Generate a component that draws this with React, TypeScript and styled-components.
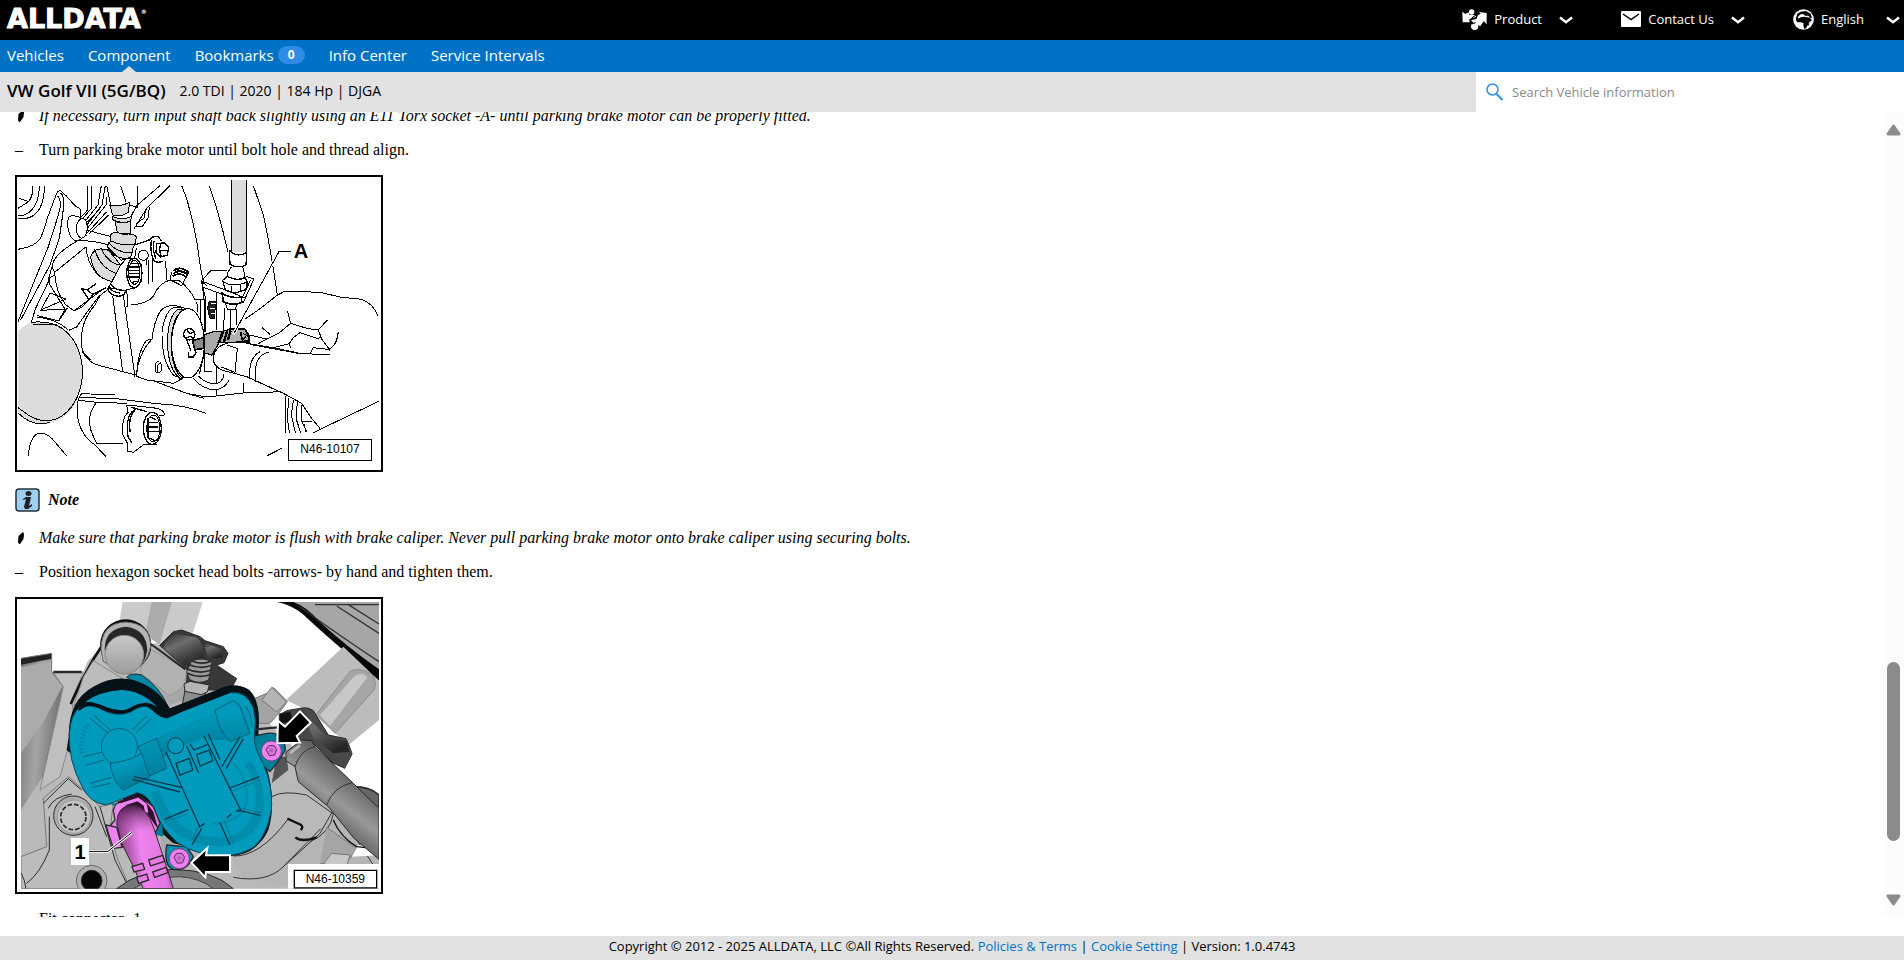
import React from "react";
import styled, { createGlobalStyle } from "styled-components";

const GlobalStyle = createGlobalStyle`
  *, *::before, *::after { box-sizing: border-box; }
  body { margin: 0; background: #fff; color: #000; font-family: "Open Sans", "Noto Sans", sans-serif; }
`;

const Page = styled.div`
  height: 100vh;
  display: flex;
  flex-direction: column;
`;

const TopBar = styled.header`
  flex: none;
  height: 40px;
  padding: 0 4px 2px 7px;
  display: flex;
  align-items: center;
  justify-content: space-between;
  background: #000;
`;

const Logo = styled.a`
  display: flex;
  align-items: flex-start;
  color: #fff;
  font: bold 27px/32px "DejaVu Sans", sans-serif;
  text-decoration: none;
  -webkit-text-stroke: 1px #fff;
  sup { font-size: 6px; line-height: 18px; -webkit-text-stroke: 0; }
`;

const Menus = styled.div`
  display: flex;
  gap: 48px;
`;

const MenuButton = styled.button`
  display: flex;
  align-items: center;
  gap: 7px;
  padding: 0;
  border: 0;
  background: none;
  color: #fff;
  font: 13px/20px "Open Sans", sans-serif;
  text-align: left;
`;

const MenuLabel = styled.span`
  min-width: 48px;
  margin-right: 10px;
`;

const Nav = styled.nav`
  flex: none;
  height: 32px;
  padding: 0 7px;
  display: flex;
  gap: 24px;
  background: #0072c6;
`;

const NavLink = styled.a<{ $active?: boolean }>`
  position: relative;
  padding-bottom: 2px;
  display: flex;
  align-items: center;
  gap: 4px;
  color: #fff;
  font-size: 15px;
  line-height: 20px;
  text-decoration: none;
  &::after {
    content: "";
    display: ${(p) => (p.$active ? "block" : "none")};
    position: absolute;
    left: 50%;
    bottom: 0;
    margin-left: -7px;
    border: 7px solid transparent;
    border-top: 0;
    border-bottom: 6px solid #e2e2e2;
  }
`;

const Badge = styled.span`
  width: 27px;
  border-radius: 9px;
  background: #2f8be6;
  font-size: 12px;
  font-weight: 700;
  line-height: 18px;
  text-align: center;
`;

const VehicleBar = styled.div`
  flex: none;
  height: 40px;
  display: flex;
  align-items: stretch;
  background: #e2e2e2;
`;

const Vehicle = styled.div`
  flex: 1;
  padding: 0 7px 2px;
  display: flex;
  align-items: center;
  gap: 14px;
  h1 { margin: 0; font-size: 17px; line-height: 36px; font-weight: 600; }
  span { font-size: 14px; line-height: 36px; }
`;

const Search = styled.label`
  flex: 0 0 428px;
  padding: 0 10px;
  display: flex;
  align-items: center;
  gap: 9px;
  background: #fff;
  input {
    flex: 1;
    padding: 0;
    border: 0;
    outline: 0;
    font: 500 13px/20px "Open Sans", sans-serif;
    &::placeholder { color: #8a8a8a; opacity: 1; }
  }
`;

const Main = styled.main`
  flex: 1;
  min-height: 0;
  padding-bottom: 19px;
  display: flex;
`;

const Viewport = styled.div`
  flex: 1;
  overflow: hidden;
  padding-left: 15px;
`;

const Article = styled.article`
  margin-top: -5px;
  display: flex;
  flex-direction: column;
  align-items: flex-start;
  gap: 16px;
  font: 16px/18px "Liberation Serif", "Times New Roman", serif;
`;

const Line = styled.p<{ $italic?: boolean }>`
  margin: 0;
  display: grid;
  grid-template-columns: 24px 1fr;
  align-items: center;
  font-style: ${(p) => (p.$italic ? "italic" : "normal")};
  white-space: nowrap;
`;

const NoteTitle = styled.div`
  height: 25px;
  display: flex;
  align-items: flex-start;
  gap: 8px;
  font-weight: 700;
  font-style: italic;
  line-height: 24px;
`;

const Figure = styled.figure`
  width: 368px;
  height: 297px;
  margin: 0;
  border: 2px solid #000;
  svg { display: block; width: 100%; height: 100%; }
`;

const ScrollBar = styled.div`
  flex: 0 0 22px;
  padding: 12px 0 11px;
  display: flex;
  flex-direction: column;
  align-items: center;
  background: #fcfcfc;
`;

const Spacer = styled.div<{ $grow: number }>`
  flex: ${(p) => p.$grow} 0 0;
`;

const Thumb = styled.div`
  flex: 179 0 0;
  width: 13px;
  border-radius: 7px;
  background: #8b8b8b;
`;

const Footer = styled.footer`
  flex: none;
  height: 24px;
  background: #e2e2e2;
  font-size: 13px;
  line-height: 21px;
  text-align: center;
  a { color: #0072c6; text-decoration: none; }
`;

const Chevron = () => (
  <svg width="14" height="9" viewBox="0 0 14 9">
    <path d="M1 2.500 7 7.200l6-4.700" fill="none" stroke="#fff" strokeWidth="2.500" />
  </svg>
);

const ProductIcon = () => (
  <svg width="25" height="21" viewBox="0 0 75 63" fill="#fff">
    <path d="M1 8l9 7 9-5 4 8 14 0 6 6-12 2-10 6 3 8-22 0z" />
    <circle cx="29" cy="9" r="8" />
    <path d="M74 12l0 34-9-9-10 14-16-7-14-10 18-4 5-12 8-3-5-6z" />
    <circle cx="38" cy="52" r="11" />
    <path d="M24 40l8-16 12-6M29 45l12-4" stroke="#000" strokeWidth="3" fill="none" />
  </svg>
);

const MailIcon = () => (
  <svg width="20" height="16" viewBox="0 0 20 16">
    <rect width="20" height="16" rx="1" fill="#fff" />
    <path d="M2 3l8 5.500L18 3" fill="none" stroke="#000" strokeWidth="1.500" />
  </svg>
);

const GlobeIcon = () => (
  <svg width="21" height="21" viewBox="0 0 63 63">
    <circle cx="31.500" cy="31.500" r="31" fill="#fff" />
    <path
      d="M9 28l4-14 10-6 16-2 14 8 4 12-6 2 6 5-7 6-5 8-6 11-5 2-3-10 1-7-8-3-11 0-4-6z"
      fill="#000"
    />
    <path d="M16 22l7-6 9 0 4 4 10 0 6 6-8-1-12-2-9 2-8 4z" fill="#fff" />
    <path d="M44 47l5-4-2 8z" fill="#000" />
  </svg>
);

const SearchIcon = () => (
  <svg width="17" height="18" viewBox="0 0 17 18" fill="none" stroke="#2f8fe8" strokeWidth="1.500">
    <circle cx="6.500" cy="6.500" r="5.500" />
    <path d="M10.500 11l6 6" strokeWidth="2" />
  </svg>
);

const Arrow = ({ down }: { down?: boolean }) => (
  <svg width="15" height="12" viewBox="0 0 15 12">
    <path
      d={down ? "M2 2h11L7.500 10z" : "M2 10h11L7.500 2z"}
      fill="#8b8b8b"
      stroke="#8b8b8b"
      strokeWidth="3"
      strokeLinejoin="round"
    />
  </svg>
);

const Diamond = () => (
  <svg width="11" height="14" viewBox="0 0 11 14">
    <path d="M8 1L9 3 8.500 8 5 13H4L3 11 3.500 5z" />
  </svg>
);

const InfoIcon = () => (
  <svg width="25" height="24" viewBox="0 0 25 24">
    <rect x="1" y="1" width="23" height="22" rx="3" fill="#9fcff3" stroke="#24303a" strokeWidth="1.500" />
    <ellipse cx="13.500" cy="5.500" rx="3" ry="2.500" fill="#222" />
    <path d="M8 11l3-2h5l-2 9 3-2v2l-4 3h-3l-1-2 2-8-3 1z" fill="#222" />
  </svg>
);

const SocketFitting = () => (
  <svg
    viewBox="51 36 1092 879"
    preserveAspectRatio="none"
    fill="none"
    stroke="#000"
    strokeWidth="3"
    shapeRendering="crispEdges"
    role="img"
    aria-label="Turning the input shaft with a Torx socket"
  >
    {/* housing edges, top left */}
    <path d="M97 62Q101 90 86 110L56 100M86 110L54 130M118 62Q118 110 95 135 75 155 54 152M133 62Q134 120 108 145 88 165 54 160" />
    <path d="M54 253Q105 245 120 222 135 190 140 165L168 90Q172 76 182 77L198 92 225 122 240 131 243 158" />
    <path d="M54 470L90 380 145 245 172 160 180 130Q184 98 170 92M62 465L150 300 178 220 188 150 192 110Q190 90 182 84M54 582L80 520 106 432 150 340" />
    <path d="M243 158Q212 146 206 158 198 180 210 210 218 228 234 228L260 210" />
    <path d="M240 160L262 136 264 62M250 158L274 130 276 62M258 165L294 120 304 62M262 178L306 120 316 62M262 190L318 120 320 95M262 204L320 140M266 208L326 150M262 172L300 130" />
    <path d="M262 190Q260 216 244 220 228 212 228 186 236 158 250 160 262 166 262 190Z" fill="#fff" />
    <path d="M412 62V128L385 118M510 62L440 130 402 192M480 62L410 122 394 152M448 125L445 158 426 186 408 184M436 132L434 158 408 176" />
    {/* upper hose */}
    <path d="M320 62L332 120M362 62L378 110" />
    <g fill="#dcdcdc">
      <path d="M330 122Q362 126 388 112L386 142Q362 158 338 150Z" />
      <path d="M338 154Q362 168 394 155L392 168Q362 178 338 164Z" />
      <path d="M346 170L352 205H392L392 168Q370 178 346 170Z" />
      <path d="M332 210Q338 196 370 208 404 204 409 216L406 236Q372 246 332 228Z" />
      <path d="M334 228Q372 246 406 236L398 252 392 276 364 286 322 246 326 234Z" />
      <path d="M306 252Q280 250 272 275 274 305 300 335 330 352 346 349 362 330 362 300L326 256Z" />
    </g>
    <path d="M258 246Q262 300 300 335M284 253Q300 310 350 326M304 252Q325 295 360 300M322 252Q340 275 375 282M328 236Q360 268 398 262" />
    {/* connector and union */}
    <path d="M324 372L362 300 378 282 405 280 424 300 426 345 410 368 372 376 340 370Z" fill="#fff" />
    <ellipse cx="403" cy="324" rx="23" ry="44" fill="#fff" strokeWidth="4" />
    <ellipse cx="403" cy="322" rx="17" ry="36" />
    <path d="M390 296H412M388 306H418M386 316H419M388 326H419M390 336H416M396 352L412 348M386 294V338" strokeWidth="4" />
    <path d="M404 240L450 224Q455 212 476 216L484 228M455 225Q448 250 460 285 470 297 488 288M462 228Q456 255 468 280" strokeWidth="4" />
    <path d="M470 235L495 234 506 248 502 270 482 276 468 262ZM482 234L478 258 484 275M478 258L504 256" fill="#fff" strokeWidth="4" />
    <circle cx="430" cy="271" r="15" />
    <path d="M446 285V358M456 278V350M440 285V300M497 288L500 345M409 250L404 280" />
    {/* left bracket block */}
    <path d="M232 228Q160 268 156 305L164 322 250 252 258 246M164 322Q166 380 196 418L222 438 310 372M156 305L146 340 150 360 195 432M146 340L164 330M222 438L248 425 270 400M234 226Q290 228 326 240M262 196L330 214" />
    <path d="M244 370L268 405M244 370L262 375 288 356M268 405L278 388 318 368M278 388L262 375" strokeWidth="4" />
    <path d="M150 384L198 402 120 436M150 384L122 436 200 432 176 468M112 452L176 468 195 432" />
    <path d="M322 368Q330 392 356 394 378 390 376 376M326 362Q336 384 360 384M332 358Q345 376 368 376" strokeWidth="4" />
    <path d="M338 392L368 620M370 390L405 636M380 375L384 422 374 430" />
    <path d="M322 376Q300 385 285 420 240 470 244 540 252 590 300 602L430 636 560 685 612 700M206 496L230 486 262 440 300 390M246 560L272 586" />
    <path d="M394 420Q448 415 462 390 478 354 510 345L535 345Q568 368 585 404" />
    <path d="M515 322L510 344 545 362 562 328" />
    <path d="M520 318Q540 300 566 322M520 326Q540 310 564 330M518 334Q538 318 560 338M524 312L566 326" strokeWidth="5" />
    {/* motor flange */}
    <path d="M560 432Q505 408 480 440 462 470 456 522 412 570 410 634L440 645 520 655 548 640" fill="#fff" />
    <path d="M456 522L440 526Q412 560 410 634" />
    <path d="M545 430Q500 410 486 500 484 590 522 632L548 640 524 600Q500 520 524 450Z" fill="#fff" />
    <path d="M536 432Q504 448 502 535 506 616 540 640L552 638Q514 590 516 530 520 455 550 432Z" fill="#dcdcdc" />
    <ellipse cx="564" cy="535" rx="49" ry="104" fill="#fff" />
    <path d="M532 450Q510 490 514 560 520 615 546 640" />
    <ellipse cx="475" cy="607" rx="10" ry="17" />
    <path d="M480 594Q466 606 474 622" />
    <path d="M584 404H612V500M590 410L594 440M600 404V464L608 480M612 404L606 350 620 362" />
    {/* input shaft */}
    <circle cx="568" cy="508" r="17" strokeWidth="4" fill="#fff" />
    <path d="M562 496L570 506 582 500M558 518L572 514 584 524M560 524L568 545 574 560" strokeWidth="4" />
    <path d="M566 560L566 576H580L588 562 582 552" strokeWidth="4" fill="#fff" />
    {/* cable and sleeve */}
    <path d="M693 45V262H738V45Z" fill="#dcdcdc" stroke="none" />
    <path d="M693 45V262M738 45V262" />
    <path d="M688 256Q712 280 740 262L738 300Q712 312 690 298Z" fill="#fff" strokeWidth="4" />
    <path d="M694 306L682 324 682 336Q710 350 735 338L732 322 728 306" fill="#fff" />
    <path d="M668 346L682 334Q710 350 735 338L742 350 738 374 706 384 676 376Z" fill="#fff" strokeWidth="4" />
    <path d="M668 350Q700 368 740 352M694 362V380M720 360V380" />
    <path d="M680 318L634 315 604 348 608 366 730 412 762 342 738 334M604 348L668 372 728 396 752 344M608 366L616 398 616 500M650 384L648 498M664 386Q690 412 736 396" />
    <path d="M666 384Q690 402 724 396V412Q700 425 670 410Z" fill="#fff" strokeWidth="5" />
    <path d="M676 414L682 432H706L712 416M674 430L670 500M690 434V498M708 432V490" />
    <path d="M628 408Q618 430 630 460L644 462 646 410Z" fill="#222" />
    <path d="M632 416H648M630 430H646M632 446H646" stroke="#fff" />
    {/* long body lines */}
    <path d="M545 62L560 100 578 170 592 240 602 310 610 348M628 62L650 130 668 195 684 262M760 62L790 150 806 230 820 310 832 390" />
    <path d="M612 568V620L636 620M648 598V655M580 640Q610 676 650 674 676 668 688 644M596 634Q620 658 650 656 668 650 672 628M650 676V694M730 655V684M612 570L598 628" />
    <path d="M560 685L620 696 730 684 850 680" />
    {/* hand and tool */}
    <path d="M735 462L775 435 830 392 855 378 960 382 1020 396 1085 403Q1120 416 1133 452L1138 708 958 794 905 715 850 685 740 635 700 620 720 540Z" fill="#fff" stroke="none" />
    <path d="M735 462L775 435 830 392 855 378 960 382 1020 396 1085 403Q1120 416 1133 452" />
    <path d="M862 437L872 475 836 505 800 522 775 536M872 475L920 490 955 495 982 465M955 495L965 522 990 556M785 487L810 508M1015 500Q1010 545 985 553L940 548 930 568M820 548L868 536 880 518 900 503 950 520 962 518M740 535L820 548 900 565 990 570M868 536L872 550M748 510L800 522" />
    <path d="M578 526L612 518V550L584 554Z" fill="#8b8b8b" strokeWidth="5" />
    <path d="M612 510L640 500 678 500 656 535 636 570 614 564Z" fill="#a9a9a9" strokeWidth="4" />
    <path d="M654 532L666 500 690 492 736 492 748 526 700 532Z" fill="#b0b0b0" />
    <path d="M658 530L670 500M672 530L682 496M684 524L692 496" strokeWidth="7" />
    <path d="M688 492H734L746 510V530H728L722 502" strokeWidth="5" />
    <path d="M728 505L742 512M726 525L738 515" strokeWidth="4" />
    <path d="M640 575Q645 545 680 535 720 525 760 540L900 566 850 685 740 635 665 615Q638 600 640 575Z" fill="#fff" stroke="none" />
    <path d="M960 790L935 760 905 715 850 685 740 635 665 615Q636 600 640 575 645 545 680 535 720 525 760 540L900 566M680 540L712 550 705 622 664 606M780 560Q744 580 750 638M808 562Q758 568 768 650M1138 708L940 803" />
    <path d="M855 692V803M866 700L862 760 868 803M880 706L874 750 886 803M892 712L888 760 902 803M905 720V768L920 800M905 768H935M912 778L918 800" />
    <path d="M838 258L700 508" stroke="#fff" strokeWidth="9" />
    <path d="M872 258H838L702 505" />
    {/* large round housing */}
    <path d="M54 500Q80 466 135 470 160 476 180 484 248 525 248 625 240 760 140 775 90 780 54 740Z" fill="#dcdcdc" stroke="none" />
    <path d="M98 480Q130 475 170 480 245 520 248 625 242 710 190 750 140 785 85 750L54 728M96 472Q150 466 186 490M54 744Q100 788 150 772M110 456Q170 462 206 496" />
    {/* lower connector */}
    <path d="M246 686L345 690M236 698L340 700 470 716Q560 720 617 745M246 686Q228 700 232 750 240 810 285 840L318 875M236 706L290 712Q258 750 274 800L290 836M290 712L380 715M290 836H368" />
    <path d="M380 720L420 724 472 730Q496 738 492 752L478 750M380 720L384 742Q364 760 368 808L384 838 382 858 400 862 430 840 470 838" fill="#fff" />
    <path d="M398 738Q376 760 384 815L396 834M408 732Q384 750 390 800M392 726L440 740" strokeWidth="4" />
    <ellipse cx="457" cy="790" rx="27" ry="48" fill="#fff" strokeWidth="4" />
    <ellipse cx="460" cy="790" rx="20" ry="40" />
    <path d="M446 772H474M442 786H474M442 800H476M450 820L466 828M452 756L468 764M444 760V820" strokeWidth="4" />
    <path d="M85 873Q90 806 122 804 146 806 166 832L200 873M800 873L845 850" />
    <path d="M865 823H1115V886H865Z" fill="#fff" strokeWidth="3" />
    <g fill="#000" stroke="none" fontFamily="Liberation Sans, Arial, sans-serif">
      <text x="990" y="865" fontSize="36" textAnchor="middle">N46-10107</text>
      <text x="903" y="279" fontSize="60" fontWeight="700" textAnchor="middle">A</text>
    </g>
  </svg>
);

const MotorBolts = () => (
  <svg
    viewBox="51 27 1092 879"
    preserveAspectRatio="none"
    fill="none"
    stroke="#2a2a2a"
    strokeWidth="3"
    role="img"
    aria-label="Parking brake motor with securing bolts"
  >
    <defs>
      <clipPath id="photo"><path d="M63 36H1137V896H63Z" /></clipPath>
      <linearGradient id="panel" x1="0" x2="1" y1="0" y2="0.300">
        <stop offset="0" stopColor="#767676" /><stop offset="0.500" stopColor="#a4a4a4" /><stop offset="1" stopColor="#6e6e6e" />
      </linearGradient>
      <linearGradient id="cast" x1="0" x2="1" y1="0" y2="1">
        <stop offset="0" stopColor="#c6c6c6" /><stop offset="1" stopColor="#a3a3a3" />
      </linearGradient>
      <linearGradient id="clamp" x1="0" x2="0.600" y1="0" y2="1">
        <stop offset="0" stopColor="#2b2b2b" /><stop offset="0.400" stopColor="#6e6e6e" /><stop offset="1" stopColor="#262626" />
      </linearGradient>
      <linearGradient id="tube" x1="0.600" x2="0.300" y1="0.200" y2="0.700">
        <stop offset="0" stopColor="#5c5c5c" /><stop offset="0.500" stopColor="#999" /><stop offset="1" stopColor="#505050" />
      </linearGradient>
      <linearGradient id="pin" x1="0" x2="0" y1="0" y2="1">
        <stop offset="0" stopColor="#c8c8c8" /><stop offset="1" stopColor="#9c9c9c" />
      </linearGradient>
      <linearGradient id="plug" x1="0" x2="1" y1="0.200" y2="0">
        <stop offset="0" stopColor="#8d3f8b" /><stop offset="0.350" stopColor="#ee82ee" /><stop offset="0.700" stopColor="#e27ae2" /><stop offset="1" stopColor="#6d2e6c" />
      </linearGradient>
      <linearGradient id="mouth" x1="0" x2="0" y1="0" y2="1">
        <stop offset="0" stopColor="#3a1236" stopOpacity="0.900" /><stop offset="1" stopColor="#8d3f8b" stopOpacity="0" />
      </linearGradient>
      <linearGradient id="barrel" x1="0" x2="0.400" y1="0" y2="1">
        <stop offset="0" stopColor="#008cab" /><stop offset="0.400" stopColor="#009abd" /><stop offset="1" stopColor="#007a97" />
      </linearGradient>
    </defs>
    <g clipPath="url(#photo)">
      {/* carrier and background castings */}
      <path d="M155 245H250L420 200 700 300 860 450 1000 600 1090 640 1137 700V900H63V500Z" fill="#b9b9b9" stroke="none" />
      <path d="M368 36H608L580 125 500 175 440 140 358 95Z" fill="#cacaca" stroke="none" />
      <path d="M455 36H515L478 165 436 130Z" fill="#acacac" stroke="none" />
      <path d="M835 36H1137V270L1030 170Q940 70 835 36Z" fill="#a6a6a6" stroke="none" />
      <path d="M832 36Q870 42 908 72 980 140 1137 272L1137 238Q1040 170 960 96 920 50 880 36Z" fill="#080808" stroke="none" />
      <path d="M900 50Q980 110 1137 215M945 44H1137M1010 48L1137 130M1045 44L1137 102" stroke="#333" strokeWidth="4" />
      <path d="M1030 170L1137 272V390L1046 465 960 390 900 350 858 330Z" fill="#bcbcbc" stroke="none" />
      <path d="M950 372L1050 245Q1075 230 1110 250 1134 268 1122 300L1005 430Z" fill="#a6a6a6" stroke="#8c8c8c" />
      <path d="M960 376L1060 262Q1085 240 1102 262L990 408Z" fill="#c8c8c8" stroke="none" />
      {/* left panel */}
      <path d="M63 205L155 192V245L190 290 165 400 128 560 63 660Z" fill="url(#panel)" stroke="none" />
      <path d="M63 232L155 212V248L188 288 128 400 63 490Z" fill="#ababab" stroke="none" />
      <path d="M63 205L155 190V206L63 224Z" fill="#222" stroke="none" />
      <path d="M63 205L155 190V245L190 290M190 290L128 560" stroke="#777" />
      <path d="M160 248L250 246 215 330 225 400 180 560 120 600 170 380 190 290Z" fill="#bfbfbf" stroke="#8a8a8a" />
      <path d="M160 246H245" strokeWidth="7" />
      {/* dark hose clamp behind the caliper */}
      <path d="M475 170L520 125 545 120 600 140 615 152 670 170 684 190 672 218 650 225 710 266 700 285 660 300 560 300 545 240Z" fill="#383838" />
      <path d="M530 132Q500 145 490 175L555 228 570 206 610 205Q612 160 590 142Z" fill="url(#clamp)" stroke="none" />
      <path d="M610 157L665 177 668 205 625 205Z" fill="url(#clamp)" stroke="none" />
      {/* upper guide lug */}
      <path d="M300 175L262 215 215 340 280 300 372 262 440 268 510 345 555 330 560 240 470 160Z" fill="url(#cast)" stroke="none" />
      <path d="M303 172L280 208 245 272 212 342" strokeWidth="8" stroke="#111" />
      <path d="M280 212L368 266 300 282 270 312 234 346 222 346 250 262Z" fill="#bcbcbc" stroke="#888" />
      <path d="M440 170L560 240 552 290 510 318 420 248Z" fill="#b1b1b1" stroke="#999" />
      <circle cx="377" cy="165" r="77" fill="#0c0c0c" stroke="none" />
      <path d="M303 180Q302 100 377 96 452 100 452 170 440 230 385 252L310 215Z" fill="#b5b5b5" stroke="#666" />
      <path d="M314 180Q314 116 377 110 438 116 442 180 436 225 400 245Z" fill="#262626" stroke="none" />
      <circle cx="373" cy="194" r="58" fill="url(#pin)" stroke="#888" />
      <path d="M452 162L480 182 556 238" strokeWidth="6" />
      {/* bleed nipple */}
      <path d="M560 275L618 282 614 335 546 350Z" fill="#8d8d8d" />
      <path d="M552 282L570 274 628 285 622 306 604 314 555 304Z" fill="#b5b5b5" />
      <path d="M575 212Q610 200 636 216L626 270Q596 285 568 268L560 245Z" fill="#9a9a9a" />
      <path d="M562 222Q600 240 636 226M560 236Q596 254 634 240M562 250Q594 266 630 254M574 212Q604 226 634 214" strokeWidth="5" />
      {/* right fitting */}
      <path d="M765 325L800 310 820 292 862 335 840 365 810 400 770 400Z" fill="#a3a3a3" stroke="#777" />
      <path d="M785 330L815 292 860 335 830 366Z" fill="#b4b4b4" stroke="#777" />
      <path d="M838 375L860 362 900 355Q925 350 940 362L985 435 1038 446 1058 490 1035 535 1000 520 930 450 870 460Z" fill="#484848" />
      <path d="M905 360L980 442 1040 452 1048 485 1000 490 940 445Z" fill="url(#clamp)" stroke="none" />
      <path d="M838 400V372L870 365 880 395Z" fill="#111" />
      <path d="M830 500L860 500 865 540 815 580Z" fill="#555" stroke="none" />
      {/* lower right castings */}
      <path d="M820 590Q900 580 960 640L1000 670 940 745 860 690 790 770 690 800 730 860 880 896H1137V700L1050 640 900 580Z" fill="#b5b5b5" stroke="none" />
      <path d="M815 620Q850 600 920 615L1000 672Q990 730 930 755M700 798Q780 800 862 690M700 862Q800 880 850 830L962 716M1000 660L960 730 850 830M1000 660L1050 720 1137 850" stroke="#333" />
      <path d="M862 686L902 704Q912 712 902 720M886 742Q905 758 950 742" stroke="#111" strokeWidth="7" />
      <path d="M980 712L1070 775 1050 806 960 822" fill="#a5a5a5" stroke="#777" />
      <path d="M995 790L1050 795 1040 830 970 822Z" fill="#c8c8c8" stroke="#777" />
      <path d="M1075 765L1137 775V796L1055 800Z" fill="#fff" stroke="none" />
      <path d="M1000 690Q1020 740 1070 770L1120 775" stroke="#111" strokeWidth="4" />
      <path d="M1137 396L1050 468 1058 492 1034 538 1062 594 1100 592 1137 610Z" fill="#fff" stroke="none" />
      <path d="M1060 590Q1110 590 1137 615V660Z" fill="#666" strokeWidth="5" />
      {/* brake hose */}
      <path d="M858 486L905 450 935 452 945 470 1060 580 1090 610 1137 655V808L1062 745 985 650 895 575 885 530 858 512Z" fill="url(#tube)" />
      <path d="M945 470Q900 480 885 530M1056 578Q1000 590 980 645" stroke="#333" />
      <path d="M870 490L900 466" stroke="#bbb" strokeWidth="8" />
      {/* lower left carrier */}
      <path d="M130 625L205 560 245 595 300 650 340 640 330 720 350 800 390 896H63V800L140 770Z" fill="#bcbcbc" stroke="#777" />
      <path d="M130 640L205 566 245 600M145 655Q160 620 215 612M148 680V780Q120 850 80 880M300 650L345 810 380 880M285 650L320 740M63 848Q75 870 78 896" />
      <circle cx="220" cy="677" r="59" fill="#adadad" />
      <circle cx="222" cy="680" r="50" fill="#c2c2c2" stroke="#999" />
      <circle cx="220" cy="681" r="38" strokeWidth="5" strokeDasharray="14 6" />
      <circle cx="275" cy="872" r="46" fill="#b0b0b0" stroke="#666" />
      <circle cx="275" cy="872" r="31" fill="#070707" />
      <path d="M350 896Q420 840 520 838 640 840 700 896Z" fill="#777" />
      <path d="M400 896Q460 860 540 860 600 864 640 896Z" fill="#a8a8a8" stroke="#444" />
      <path d="M480 740L520 745 510 800 490 790Z" fill="#aaa" stroke="none" />
      {/* motor housing shadow and rim */}
      <path d="M380 262Q395 246 425 255 480 290 506 355L480 360 440 300Z" fill="#0087a5" />
      <path d="M206 440Q205 330 280 290 340 255 400 270 470 290 510 355L650 300Q700 272 745 298 785 330 775 430L800 530Q830 640 805 720 770 795 690 798L520 760 200 480Z" fill="#051218" stroke="none" />
      <path d="M256 335Q300 304 365 300 430 304 472 352 440 325 405 350 370 370 320 352 288 335 256 335Z" fill="#0097ba" stroke="none" />
      <path d="M755 440L800 430Q855 425 856 480 840 510 810 545L780 520Z" fill="#007f9c" strokeWidth="4" />
      <path d="M752 420L830 412 856 424" strokeWidth="7" />
      <path d="M500 765Q490 830 520 838 560 845 580 800L560 770Z" fill="#0090b1" strokeWidth="4" />
      <path d="M330 640L480 640 490 740 470 735Z" fill="#007c98" stroke="none" />
      {/* motor housing */}
      <path
        d="M208 430Q212 372 240 352 265 340 300 356 350 384 392 366 420 346 442 350 466 364 480 378 500 388 545 364L690 308Q740 302 760 354 770 390 764 430 758 470 790 522 820 590 814 660 800 740 760 772 720 796 680 796 590 800 530 756 480 710 464 660 446 614 412 608L320 645Q270 640 246 590 204 510 208 430Z"
        fill="#009abd"
        stroke="#00495a"
      />
      <path d="M450 605Q470 690 530 730 600 780 690 765 780 740 792 650 794 570 750 510L735 525Q775 590 765 650 750 730 670 742 580 745 530 690 490 650 480 600Z" fill="#008dad" stroke="none" />
      <path d="M700 520Q745 560 740 640 720 700 640 700" stroke="#008cab" strokeWidth="8" />
      <g stroke="#006079">
        <path d="M270 385L325 430M282 376L335 424M398 420L440 378M408 428L452 388M250 500L308 486M258 526L312 510M270 580L335 562M278 592L330 580" />
        <path d="M470 445L640 370 650 350 700 330Q730 340 735 360L750 420 690 450 620 450 500 500 488 500Z" fill="url(#barrel)" stroke="none" />
        <path d="M470 445L646 372M500 500L620 450" stroke="#008aa8" />
        <circle cx="358" cy="470" r="54" fill="#009abd" />
        <path d="M330 520Q395 512 428 488L450 560 370 600Q340 580 330 520Z" fill="url(#barrel)" />
        <path d="M413 470L470 445 500 535 448 558 425 490ZM645 360L700 332Q722 340 730 380L750 430 690 455Q655 420 645 360ZM730 345Q754 360 756 410" fill="url(#barrel)" />
      </g>
      <path d="M500 490L520 478 620 440 720 660 690 672 600 706 545 600Z" fill="#009abd" stroke="none" />
      <g stroke="#00394a">
        <circle cx="527" cy="467" r="24" fill="#009abd" />
        <path d="M498 486L600 712M612 438L722 660M625 432L660 510M596 712L614 700M680 684L695 672M720 662L708 664" strokeWidth="4" />
        <path d="M528 520L568 505 578 540 540 555ZM590 494L628 480 638 512 600 528ZM570 462L582 480 622 464M560 468L596 548" strokeWidth="4" />
        <path d="M402 560L545 592M398 568L540 606M720 440L665 530M730 446L678 536M690 594L778 560M494 688L565 658M605 715L576 765M660 698L690 765M712 660L780 676" strokeWidth="4" />
        <path d="M700 602L780 570M500 694L562 672M592 712L580 750M672 690L700 760M722 654L782 668" stroke="#007690" />
      </g>
      <path d="M246 490Q236 440 268 400" stroke="#0085a3" strokeWidth="12" strokeDasharray="5 6" />
      <path d="M236 360Q260 336 300 350 350 378 390 358 425 334 454 352 476 378 500 382L545 362 690 304" stroke="#031015" strokeWidth="7" />
      {/* connector 1 */}
      <path d="M340 660L350 640 420 618 460 650 480 700 440 780 365 770 320 720 345 690Z" fill="#ee82ee" strokeWidth="4" />
      <path d="M318 705L350 712 366 772 340 775 325 730Z" fill="#ee82ee" strokeWidth="4" />
      <path d="M350 636L408 612 430 625 460 665 476 720 440 670Z" fill="#31102f" stroke="none" />
      <path d="M346 668L352 648 414 628 436 645 440 668" stroke="#ee82ee" strokeWidth="10" />
      <path d="M350 700Q352 645 400 645 440 652 460 710L490 800 520 896H430L400 830 365 760Z" fill="url(#plug)" />
      <path d="M350 700Q352 645 400 645 440 652 460 710L464 724H354Z" fill="url(#mouth)" stroke="none" />
      <g fill="#e67be6" strokeWidth="4">
        <path d="M396 830L428 820 434 838 402 846ZM446 810L488 796 494 814 452 828ZM410 862L440 852 446 870 416 880ZM458 846L498 832 504 848 464 862Z" />
      </g>
      {/* securing bolts */}
      {[[814, 483], [538, 806]].map(([x, y]) => (
        <g key={x}>
          <circle cx={x} cy={y} r="30" fill="#ee82ee" stroke="#7c437f" />
          <path d={`M${x - 16} ${y - 4}l8 -12 16 0 8 12 -6 16 -16 2z`} fill="#d873d8" stroke="#5f2a62" />
          <circle cx={x} cy={y - 2} r="6" fill="#b860b8" stroke="none" />
        </g>
      ))}
      {/* pointers */}
      <path d="M832 460L834 392 855 410 900 364 932 398 890 438 900 458Z" fill="#000" stroke="#fff" strokeWidth="6" />
      <path d="M574 818L622 774 618 796 690 796V846H618L616 862Z" fill="#000" stroke="#fff" strokeWidth="6" />
      <path d="M266 784H324L396 727" stroke="#fff" strokeWidth="8" />
      <path d="M266 784H324L396 727" stroke="#000" />
      <path d="M213 744H267V825H213Z" fill="#fff" stroke="none" />
      <path d="M864 822H1137V896H864Z" fill="#fff" stroke="none" />
      <path d="M883 841H1130V894H883Z" fill="#fff" stroke="#000" strokeWidth="4" />
      <g fill="#000" stroke="none" fontFamily="Liberation Sans, Arial, sans-serif">
        <text x="1006" y="879" fontSize="36" textAnchor="middle">N46-10359</text>
        <text x="240" y="806" fontSize="60" fontWeight="700" textAnchor="middle">1</text>
      </g>
    </g>
  </svg>
);

const menus = [
  { label: "Product", Icon: ProductIcon },
  { label: "Contact Us", Icon: MailIcon },
  { label: "English", Icon: GlobeIcon },
];

export default function App() {
  return (
    <Page>
      <GlobalStyle />
      <TopBar>
        <Logo href="#">ALLDATA<sup>®</sup></Logo>
        <Menus>
          {menus.map(({ label, Icon }) => (
            <MenuButton key={label} type="button">
              <Icon />
              <MenuLabel>{label}</MenuLabel>
              <Chevron />
            </MenuButton>
          ))}
        </Menus>
      </TopBar>
      <Nav>
        <NavLink href="#">Vehicles</NavLink>
        <NavLink href="#" $active>Component</NavLink>
        <NavLink href="#">Bookmarks <Badge>0</Badge></NavLink>
        <NavLink href="#">Info Center</NavLink>
        <NavLink href="#">Service Intervals</NavLink>
      </Nav>
      <VehicleBar>
        <Vehicle>
          <h1>VW Golf VII (5G/BQ)</h1>
          <span>2.0 TDI | 2020 | 184 Hp | DJGA</span>
        </Vehicle>
        <Search>
          <SearchIcon />
          <input type="text" aria-label="Search" placeholder="Search Vehicle information" />
        </Search>
      </VehicleBar>
      <Main>
        <Viewport>
          <Article>
            <Line $italic>
              <Diamond />
              <span>If necessary, turn input shaft back slightly using an E11 Torx socket -A- until parking brake motor can be properly fitted.</span>
            </Line>
            <Line>
              <span>–</span>
              <span>Turn parking brake motor until bolt hole and thread align.</span>
            </Line>
            <Figure><SocketFitting /></Figure>
            <NoteTitle><InfoIcon />Note</NoteTitle>
            <Line $italic>
              <Diamond />
              <span>Make sure that parking brake motor is flush with brake caliper. Never pull parking brake motor onto brake caliper using securing bolts.</span>
            </Line>
            <Line>
              <span>–</span>
              <span>Position hexagon socket head bolts -arrows- by hand and tighten them.</span>
            </Line>
            <Figure><MotorBolts /></Figure>
            <Line>
              <span>–</span>
              <span>Fit connector -1-.</span>
            </Line>
          </Article>
        </Viewport>
        <ScrollBar>
          <Arrow />
          <Spacer $grow={526} />
          <Thumb />
          <Spacer $grow={53} />
          <Arrow down />
        </ScrollBar>
      </Main>
      <Footer>
        Copyright © 2012 - 2025 ALLDATA, LLC ©All Rights Reserved. <a href="#">Policies &amp; Terms</a> | <a href="#">Cookie Setting</a> | Version: 1.0.4743
      </Footer>
    </Page>
  );
}
